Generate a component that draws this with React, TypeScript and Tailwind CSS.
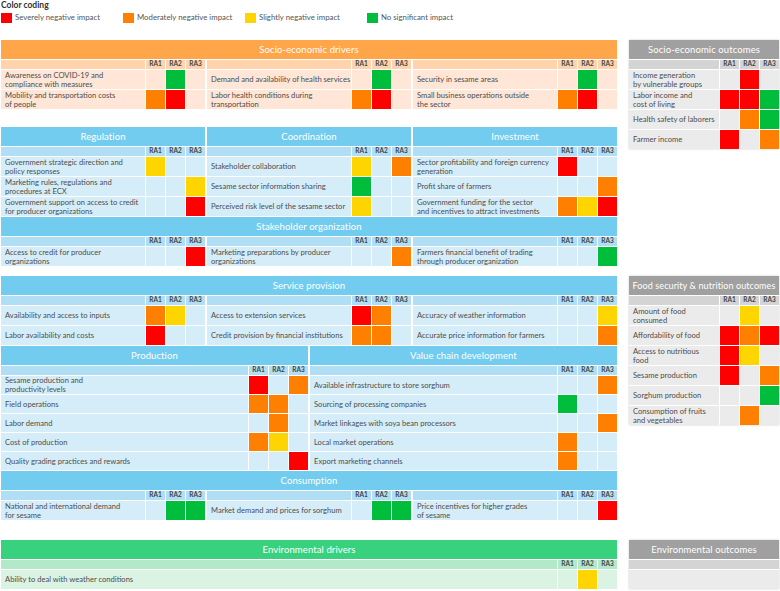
import React from 'react';

type C = '' | 'r' | 'o' | 'y' | 'g';
type Row = [string, C[]];
type Theme = { head: string; sub: string; row: string };

const FILL: Record<string, string> = {
  r: 'bg-[#ff0000]',
  o: 'bg-[#ff8000]',
  y: 'bg-[#ffd500]',
  g: 'bg-[#00be3c]',
};

const ORANGE: Theme = { head: 'bg-[#ffa54a]', sub: 'bg-[#ffd4ad]', row: 'bg-[#ffe6d6]' };
const BLUE: Theme = { head: 'bg-[#72ccf0]', sub: 'bg-[#b0dff5]', row: 'bg-[#d5edf9]' };
const GREEN: Theme = { head: 'bg-[#38d27f]', sub: 'bg-[#b3e8c8]', row: 'bg-[#daf3e3]' };
const GRAY: Theme = { head: 'bg-[#a0a0a0]', sub: 'bg-[#d4d4d4]', row: 'bg-[#ebebeb]' };

function Header({ theme, title, size = 'text-[9.5px]' }: { theme: Theme; title: string; size?: string }) {
  return (
    <div
      className={`${theme.head} ${size} h-[19px] flex items-center justify-center text-white leading-none whitespace-nowrap tracking-[0.1px]`}
    >
      {title}
    </div>
  );
}

function Grid({
  theme,
  rows,
  title,
  titleSize,
  rowH = 'h-[19px]',
}: {
  theme: Theme;
  rows: Row[];
  title?: string;
  titleSize?: string;
  rowH?: string;
}) {
  return (
    <div className="flex-1 flex flex-col gap-px min-w-0">
      {title && <Header theme={theme} title={title} size={titleSize} />}
      <div className="grid grid-cols-[1fr_19px_19px_19px] gap-px">
        <div className={`${theme.sub} h-[9px]`} />
        {['RA1', 'RA2', 'RA3'].map((l) => (
          <div
            key={l}
            className={`${theme.sub} h-[9px] flex items-center justify-center text-[6.5px] leading-none font-bold text-[#444]`}
          >
            {l}
          </div>
        ))}
        {rows.map(([t, cs], i) => (
          <React.Fragment key={i}>
            <div
              className={`${theme.row} ${rowH} flex items-center pl-[4px] whitespace-pre-line leading-[9px] text-[7.6px] text-[#4d4d4d]`}
            >
              {t}
            </div>
            {cs.map((c, j) => (
              <div key={j} className={`${rowH} ${c ? FILL[c] : theme.row}`} />
            ))}
          </React.Fragment>
        ))}
      </div>
    </div>
  );
}

function Section({
  theme,
  title,
  groups,
}: {
  theme: Theme;
  title: string;
  groups: Row[][];
}) {
  return (
    <div className="flex flex-col gap-px">
      <Header theme={theme} title={title} />
      <div className="flex gap-[2px]">
        {groups.map((g, i) => (
          <Grid key={i} theme={theme} rows={g} />
        ))}
      </div>
    </div>
  );
}

function Legend() {
  const items: [string, string][] = [
    ['bg-[#ff0000]', 'Severely negative impact'],
    ['bg-[#ff8000]', 'Moderately negative impact'],
    ['bg-[#ffd500]', 'Slightly negative impact'],
    ['bg-[#00be3c]', 'No significant impact'],
  ];
  return (
    <div className="h-[40px]">
      <div className="text-[8.5px] leading-[10px] font-bold text-[#333]">Color coding</div>
      <div className="flex mt-[3px]">
        {items.map(([c, t]) => (
          <div key={t} className="w-[122px] flex items-center gap-[3px]">
            <div className={`${c} w-[11px] h-[10px]`} />
            <div className="text-[7.8px] leading-none text-[#555]">{t}</div>
          </div>
        ))}
      </div>
    </div>
  );
}

export default function App() {
  return (
    <div className="w-[780px] h-[591px] bg-white pl-px overflow-hidden font-['Lato',sans-serif]">
      <Legend />

      {/* Band 1 */}
      <div className="flex items-start">
        <div className="w-[616px] flex flex-col">
          <Section
            theme={ORANGE}
            title="Socio-economic drivers"
            groups={[
              [
                ['Awareness on COVID-19 and\ncompliance with measures', ['', 'g', '']],
                ['Mobility and transportation costs\nof people', ['o', 'r', '']],
              ],
              [
                ['Demand and availability of health services', ['', 'g', '']],
                ['Labor health conditions during\ntransportation', ['o', 'r', '']],
              ],
              [
                ['Security in sesame areas', ['', 'g', '']],
                ['Small business operations outside\nthe sector', ['o', 'r', '']],
              ],
            ]}
          />
          <div className="mt-[18px] flex flex-col gap-px">
            <div className="flex gap-[2px]">
              <Grid
                theme={BLUE}
                title="Regulation"
                rows={[
                  ['Government strategic direction and\npolicy responses', ['y', '', '']],
                  ['Marketing rules, regulations and\nprocedures at ECX', ['', '', 'y']],
                  ['Government support on access to credit\nfor producer organizations', ['', '', 'r']],
                ]}
              />
              <Grid
                theme={BLUE}
                title="Coordination"
                rows={[
                  ['Stakeholder collaboration', ['y', '', 'o']],
                  ['Sesame sector information sharing', ['g', '', '']],
                  ['Perceived risk level of the sesame sector', ['y', '', '']],
                ]}
              />
              <Grid
                theme={BLUE}
                title="Investment"
                rows={[
                  ['Sector profitability and foreign currency\ngeneration', ['r', '', '']],
                  ['Profit share of farmers', ['', '', 'o']],
                  ['Government funding for the sector\nand incentives to attract investments', ['o', 'y', 'r']],
                ]}
              />
            </div>
            <Section
              theme={BLUE}
              title="Stakeholder organization"
              groups={[
                [['Access to credit for producer\norganizations', ['', '', 'r']]],
                [['Marketing preparations by producer\norganizations', ['', '', 'o']]],
                [['Farmers financial benefit of trading\nthrough producer organization', ['', '', 'g']]],
              ]}
            />
          </div>
        </div>
        <div className="ml-[12px] w-[150px] shadow-[0_0_2px_rgba(0,0,0,0.2)]">
          <Grid
            theme={GRAY}
            title="Socio-economic outcomes"
            rows={[
              ['Income generation\nby vulnerable groups', ['', 'r', '']],
              ['Labor income and\ncost of living', ['r', 'r', 'g']],
              ['Health safety of laborers', ['', 'o', 'g']],
              ['Farmer income', ['r', '', 'o']],
            ]}
          />
        </div>
      </div>

      {/* Band 2 */}
      <div className="flex items-start mt-[10px]">
        <div className="w-[616px] flex flex-col gap-px">
          <Section
            theme={BLUE}
            title="Service provision"
            groups={[
              [
                ['Availability and access to inputs', ['o', 'y', '']],
                ['Labor availability and costs', ['r', '', '']],
              ],
              [
                ['Access to extension services', ['r', 'o', '']],
                ['Credit provision by financial institutions', ['o', 'o', '']],
              ],
              [
                ['Accuracy of weather information', ['', '', 'y']],
                ['Accurate price information for farmers', ['', '', 'o']],
              ],
            ]}
          />
          <div className="flex gap-[2px]">
            <Grid
              theme={BLUE}
              title="Production"
              rowH="h-[18px]"
              rows={[
                ['Sesame production and\nproductivity levels', ['r', '', 'o']],
                ['Field operations', ['o', 'o', '']],
                ['Labor demand', ['', 'o', '']],
                ['Cost of production', ['o', 'y', '']],
                ['Quality grading practices and rewards', ['', '', 'r']],
              ]}
            />
            <Grid
              theme={BLUE}
              title="Value chain development"
              rowH="h-[18px]"
              rows={[
                ['Available infrastructure to store sorghum', ['', '', 'o']],
                ['Sourcing of processing companies', ['g', '', '']],
                ['Market linkages with soya bean processors', ['', '', 'o']],
                ['Local market operations', ['o', '', '']],
                ['Export marketing channels', ['o', '', '']],
              ]}
            />
          </div>
          <Section
            theme={BLUE}
            title="Consumption"
            groups={[
              [['National and international demand\nfor sesame', ['', 'g', 'g']]],
              [['Market demand and prices for sorghum', ['', 'g', 'g']]],
              [['Price incentives for higher grades\nof sesame', ['', '', 'r']]],
            ]}
          />
        </div>
        <div className="ml-[12px] w-[150px] shadow-[0_0_2px_rgba(0,0,0,0.2)]">
          <Grid
            theme={GRAY}
            title="Food security & nutrition outcomes"
            titleSize="text-[9px]"
            rows={[
              ['Amount of food\nconsumed', ['', 'y', '']],
              ['Affordability of food', ['r', 'o', 'r']],
              ['Access to nutritious\nfood', ['r', 'y', '']],
              ['Sesame production', ['r', '', 'o']],
              ['Sorghum production', ['', '', 'g']],
              ['Consumption of fruits\nand vegetables', ['', 'o', '']],
            ]}
          />
        </div>
      </div>

      {/* Band 3 */}
      <div className="flex items-start mt-[20px]">
        <div className="w-[616px] flex flex-col gap-px">
          <Header theme={GREEN} title="Environmental drivers" />
          <Grid theme={GREEN} rows={[['Ability to deal with weather conditions', ['', 'y', '']]]} />
        </div>
        <div className="ml-[12px] w-[150px] flex flex-col gap-px shadow-[0_0_2px_rgba(0,0,0,0.2)]">
          <Header theme={GRAY} title="Environmental outcomes" />
          <div className={`${GRAY.sub} h-[9px]`} />
          <div className={`${GRAY.row} h-[19px]`} />
        </div>
      </div>
    </div>
  );
}
